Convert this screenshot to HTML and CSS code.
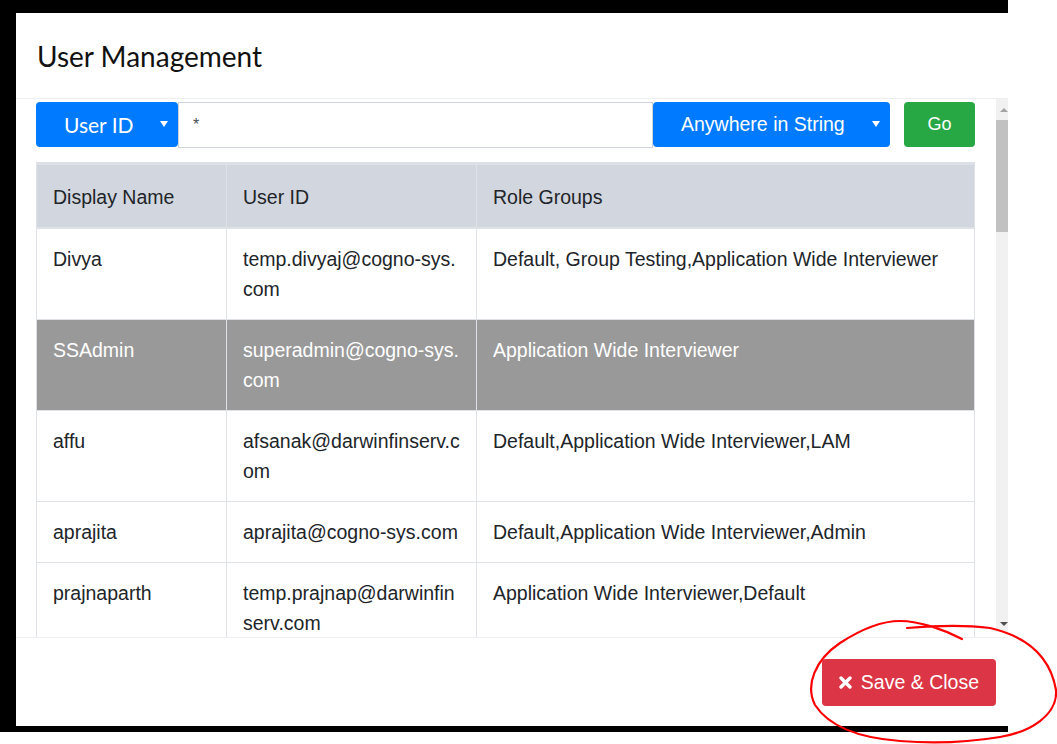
FILE: index.html
```html
<!DOCTYPE html>
<html lang="en">
<head>
  <meta charset="UTF-8">
  <meta name="viewport" content="width=device-width, initial-scale=1.0">
  <title>User Management</title>
  <link rel="stylesheet" href="styles.css">
</head>
<body>
  <div class="backdrop">
    <div class="modal">
      <div class="modal-header">
        <h2 class="modal-title">User Management</h2>
      </div>

      <div class="modal-body">
        <div class="body-content">
          <div class="search-row">
            <button class="btn-drop btn-field">
              <span>User ID</span>
              <span class="caret"></span>
            </button>
            <input class="search-input" type="text" value="*">
            <button class="btn-drop btn-match">
              <span>Anywhere in String</span>
              <span class="caret"></span>
            </button>
            <button class="btn-go">Go</button>
          </div>

          <table class="users">
            <colgroup>
              <col class="col-name">
              <col class="col-id">
              <col>
            </colgroup>
            <thead>
              <tr>
                <th>Display Name</th>
                <th>User ID</th>
                <th>Role Groups</th>
              </tr>
            </thead>
            <tbody>
              <tr>
                <td>Divya</td>
                <td>temp.divyaj@cogno-sys.com</td>
                <td>Default, Group Testing,Application Wide Interviewer</td>
              </tr>
              <tr class="selected">
                <td>SSAdmin</td>
                <td>superadmin@cogno-sys.com</td>
                <td>Application Wide Interviewer</td>
              </tr>
              <tr>
                <td>affu</td>
                <td>afsanak@darwinfinserv.com</td>
                <td>Default,Application Wide Interviewer,LAM</td>
              </tr>
              <tr>
                <td>aprajita</td>
                <td>aprajita@cogno-sys.com</td>
                <td>Default,Application Wide Interviewer,Admin</td>
              </tr>
              <tr>
                <td>prajnaparth</td>
                <td>temp.prajnap@darwinfinserv.com</td>
                <td>Application Wide Interviewer,Default</td>
              </tr>
            </tbody>
          </table>
        </div>

        <div class="scrollbar">
          <div class="sb-button"><span class="sb-arrow-up"></span></div>
          <div class="sb-thumb"></div>
          <div class="sb-track"></div>
          <div class="sb-button sb-button--down"><span class="sb-arrow-down"></span></div>
        </div>
      </div>

      <div class="modal-footer">
        <button class="btn-save">
          <svg class="icon-close" width="13" height="13" viewBox="0 0 13 13">
            <path d="M2 2 L11 11 M11 2 L2 11" stroke="#fff" stroke-width="3.4" stroke-linecap="round"/>
          </svg>
          <span>Save &amp; Close</span>
        </button>
      </div>
    </div>
  </div>

  <svg class="annotation" width="1057" height="744" viewBox="0 0 1057 744">
    <path d="M907 628 C930 626, 960 624, 990 628 C1025 636, 1050 655, 1056 690 C1058 715, 1030 732, 1000 737 C970 742, 935 744, 900 741 C860 738, 830 728, 815 705 C805 685, 815 660, 840 643 C860 630, 880 621, 900 621 C920 621, 945 630, 962 639"
          fill="none" stroke="#ff0000" stroke-width="2.2" stroke-linecap="round"/>
  </svg>
</body>
</html>
```

FILE: styles.css
```css
body {
  margin: 0;
  padding: 0;
  background: #fff;
  font-family: "Liberation Sans", Arial, sans-serif;
  color: #212529;
}

.backdrop {
  width: 992px;
  background: #000;
  padding: 13px 0 6px 16px;
}

.modal {
  background: #fff;
  height: 713px;
  display: flex;
  flex-direction: column;
}

.modal-header {
  height: 85px;
  border-bottom: 1px solid #eceef0;
  padding-left: 21px;
  display: flex;
  align-items: center;
}

.modal-title {
  margin: 0;
  font-family: Lato, "Open Sans", sans-serif;
  font-size: 28px;
  font-weight: 400;
  color: #111;
}

.modal-body {
  flex: 1;
  display: flex;
  min-height: 0;
}

.body-content {
  flex: 1;
  overflow: hidden;
  padding: 3px 21px 0 20px;
}

.search-row {
  display: flex;
  align-items: flex-start;
}

.btn-drop {
  height: 45px;
  background-color: #007bff;
  color: #fff;
  border: none;
  border-radius: 4px;
  padding: 0 10px 0 28px;
  display: flex;
  align-items: center;
  justify-content: space-between;
  cursor: pointer;
}

.btn-field {
  width: 142px;
  font-family: Lato, "Open Sans", sans-serif;
  font-size: 21px;
}

.btn-match {
  width: 237px;
  font-family: "Liberation Sans", Arial, sans-serif;
  font-size: 19.5px;
}

.caret {
  width: 0;
  height: 0;
  border-left: 4px solid transparent;
  border-right: 4px solid transparent;
  border-top: 6px solid #fff;
  margin-bottom: 2px;
}

.search-input {
  box-sizing: border-box;
  width: 475px;
  height: 46px;
  border: 1px solid #ced4da;
  padding: 0 14px;
  font-family: "Liberation Sans", Arial, sans-serif;
  font-size: 16px;
  color: #495057;
  outline: none;
}

.btn-go {
  margin-left: 14px;
  width: 71px;
  height: 45px;
  background-color: #28a745;
  color: #fff;
  border: none;
  border-radius: 4px;
  font-family: "Liberation Sans", Arial, sans-serif;
  font-size: 18px;
  cursor: pointer;
}

.users {
  width: 939px;
  margin-top: 14px;
  border-collapse: collapse;
  table-layout: fixed;
  border-top: 3px solid #dde1e7;
}

.col-name {
  width: 190px;
}

.col-id {
  width: 250px;
}

.users th,
.users td {
  padding: 15px 16px;
  line-height: 30px;
  font-size: 19.5px;
  font-weight: 400;
  text-align: left;
  vertical-align: top;
  border: 1px solid #dee2e6;
  word-break: break-all;
}

.users thead th {
  padding-top: 17px;
  background-color: #d2d6de;
  border-bottom: 2px solid #dee2e6;
}

.users tr.selected td {
  background-color: #999;
  color: #fff;
}

.scrollbar {
  width: 12px;
  margin-bottom: 5px;
  background: #f1f1f1;
  display: flex;
  flex-direction: column;
}

.sb-button {
  height: 21px;
  display: flex;
  align-items: center;
  padding-left: 4px;
}

.sb-button--down {
  height: 16px;
}

.sb-arrow-up {
  width: 0;
  height: 0;
  border-left: 4px solid transparent;
  border-right: 4px solid transparent;
  border-bottom: 4px solid #a3a3a3;
}

.sb-arrow-down {
  width: 0;
  height: 0;
  border-left: 4px solid transparent;
  border-right: 4px solid transparent;
  border-top: 4px solid #505050;
}

.sb-thumb {
  height: 112px;
  background: #c1c1c1;
}

.sb-track {
  flex: 1;
}

.modal-footer {
  height: 88px;
  border-top: 1px solid #eceef0;
  display: flex;
  justify-content: flex-end;
  align-items: center;
  padding-right: 12px;
}

.btn-save {
  height: 47px;
  padding: 0 17px;
  background-color: #dc3545;
  color: #fff;
  border: none;
  border-radius: 4px;
  display: flex;
  align-items: center;
  gap: 9px;
  font-family: "Liberation Sans", Arial, sans-serif;
  font-size: 19.5px;
  cursor: pointer;
}

.annotation {
  position: absolute;
  top: 0;
  left: 0;
  pointer-events: none;
}
```
